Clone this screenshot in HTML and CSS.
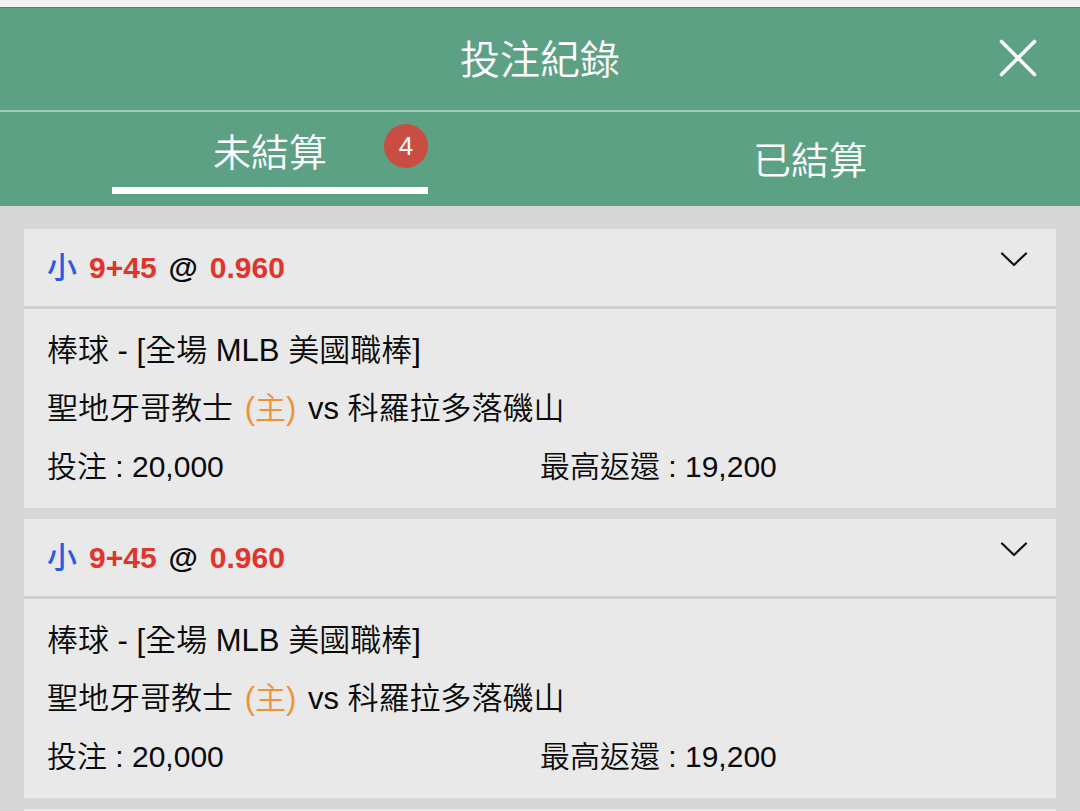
FILE: index.html
```html
<!DOCTYPE html>
<html lang="zh-Hant">
<head>
    <meta charset="UTF-8">
    <meta name="viewport" content="width=device-width, initial-scale=1.0">
    <title>投注紀錄</title>
    <link rel="stylesheet" href="styles.css">
</head>
<body>
    <header class="header">
        <h1 class="title">投注紀錄</h1>
        <button class="close" type="button" aria-label="關閉">
            <svg width="38" height="38" viewBox="0 0 38 38" fill="none" stroke="#fff" stroke-width="3.6" stroke-linecap="round"><path d="M2.5 2.5l33 33M35.5 2.5l-33 33"/></svg>
        </button>
    </header>
    <nav class="tabs">
        <button class="tab active" type="button">
            <span class="tab-label">未結算<span class="badge">4</span></span>
        </button>
        <button class="tab" type="button">
            <span class="tab-label">已結算</span>
        </button>
    </nav>
    <main class="bets">
        <section class="bet">
            <div class="bet-head">
                <h2 class="pick"><span class="side">小</span> <span class="odds">9+45</span> <span>@</span> <span class="odds">0.960</span></h2>
                <button class="toggle" type="button" aria-label="展開">
                    <svg width="28" height="16" viewBox="0 0 28 16" fill="none" stroke="#111" stroke-width="2.2" stroke-linecap="round" stroke-linejoin="round"><path d="M2 2.5l12 11.5L26 2.5"/></svg>
                </button>
            </div>
            <div class="bet-body">
                <p class="match">棒球 - [全場 MLB 美國職棒]</p>
                <p class="match">聖地牙哥教士 <span class="home">(主)</span> vs 科羅拉多落磯山</p>
                <div class="amounts">
                    <p>投注 : 20,000</p>
                    <p>最高返還 : 19,200</p>
                </div>
            </div>
        </section>
        <section class="bet">
            <div class="bet-head">
                <h2 class="pick"><span class="side">小</span> <span class="odds">9+45</span> <span>@</span> <span class="odds">0.960</span></h2>
                <button class="toggle" type="button" aria-label="展開">
                    <svg width="28" height="16" viewBox="0 0 28 16" fill="none" stroke="#111" stroke-width="2.2" stroke-linecap="round" stroke-linejoin="round"><path d="M2 2.5l12 11.5L26 2.5"/></svg>
                </button>
            </div>
            <div class="bet-body">
                <p class="match">棒球 - [全場 MLB 美國職棒]</p>
                <p class="match">聖地牙哥教士 <span class="home">(主)</span> vs 科羅拉多落磯山</p>
                <div class="amounts">
                    <p>投注 : 20,000</p>
                    <p>最高返還 : 19,200</p>
                </div>
            </div>
        </section>
        <div class="bet bet-next"></div>
    </main>
</body>
</html>
```
FILE: styles.css
```css
* {
    box-sizing: border-box;
}
body {
    margin: 0;
    min-height: 100vh;
    display: flex;
    flex-direction: column;
    border-top: 7px solid #f1f1f1;
    background-color: #d7d7d7;
    color: #0a0a0a;
    font-family: "Liberation Sans", "Noto Sans CJK TC", sans-serif;
    font-size: 30px;
    font-weight: 350;
}
h1, h2, p {
    margin: 0;
}
button {
    border: none;
    padding: 0;
    background: none;
    color: inherit;
    font-family: inherit;
    cursor: pointer;
}
svg {
    display: block;
}
.header {
    position: relative;
    display: flex;
    align-items: center;
    justify-content: center;
    height: 105px;
    padding-bottom: 4px;
    border-top: 1px solid #55806f;
    border-bottom: 2px solid #a5cab9;
    background-color: #5da185;
    color: #fff;
}
.title {
    font-size: 40px;
    font-weight: 350;
}
.close {
    position: absolute;
    right: 43px;
    top: 31px;
}
.tabs {
    display: flex;
    height: 94px;
    background-color: #5da185;
    color: #fff;
}
.tab {
    flex: 1;
    display: flex;
    align-items: center;
    justify-content: center;
    padding-top: 4px;
    font-size: 38px;
    font-weight: 350;
}
.tab.active {
    padding: 0 0 4px;
}
.tab-label {
    position: relative;
    width: 316px;
    line-height: 67px;
}
.active .tab-label {
    border-bottom: 7px solid #fff;
}
.badge {
    position: absolute;
    top: 4px;
    right: 0;
    width: 44px;
    border-radius: 50%;
    background-color: #c94d40;
    font-size: 26px;
    line-height: 44px;
}
.bets {
    flex: 1;
    display: flex;
    flex-direction: column;
    gap: 11px;
    padding: 23px 24px 0;
}
.bet {
    background-color: #e9e9e9;
}
.bet-head {
    display: flex;
    justify-content: space-between;
    height: 80px;
    padding: 0 28px 0 23px;
    border-bottom: 3px solid #cfcfcf;
}
.pick {
    display: flex;
    gap: 12px;
    font-size: 30px;
    font-weight: 700;
    line-height: 77px;
}
.side {
    color: #2d5be0;
    font-weight: 500;
}
.odds {
    color: #e0352b;
}
.toggle {
    align-self: flex-start;
    padding-top: 22px;
}
.bet-body {
    padding: 13px 23px 12px;
    line-height: 58px;
}
.match {
    font-size: 31px;
}
.home {
    margin: 0 3px;
    color: #ee9335;
}
.amounts {
    display: grid;
    grid-template-columns: 1fr 1fr;
}
.bet-next {
    flex: 1;
}
```
